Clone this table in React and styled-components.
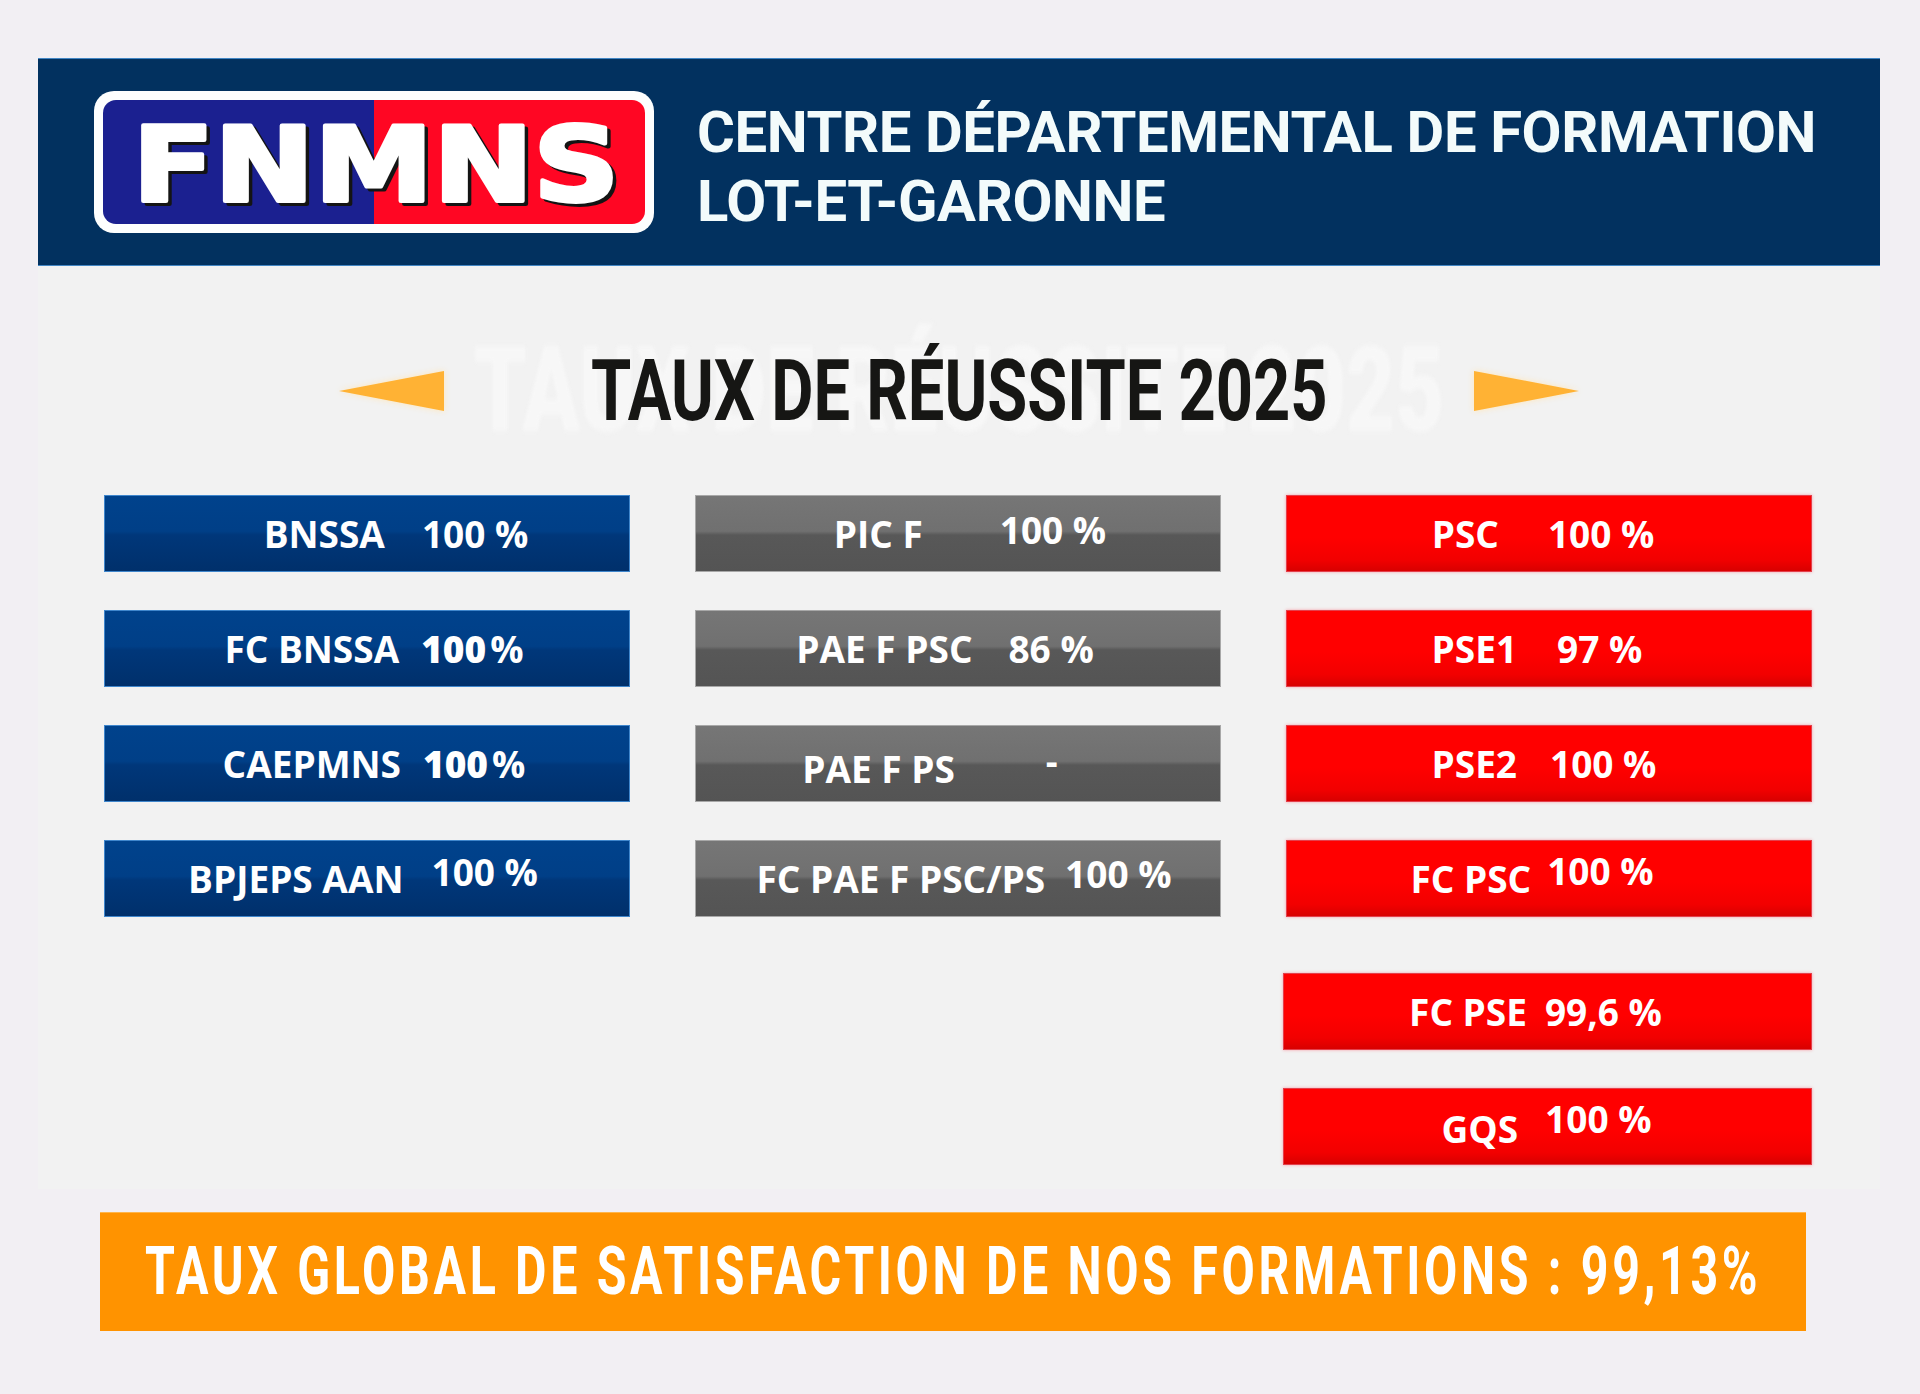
import React from 'react';
import styled, { createGlobalStyle, css } from 'styled-components';

const GlobalStyle = createGlobalStyle`
  html, body {
    margin: 0;
    padding: 0;
    background: #f2eff3;
  }
  * { box-sizing: border-box; }
`;

const Heavy = styled.span`
  font-weight: 800;
  margin-right: 4px;`;

const blueRows = [
  { label: 'BNSSA', value: '100 %', gap: 37, shift: 29 },
  { label: 'FC BNSSA', value: <><Heavy>100</Heavy>%</>, gap: 22, shift: 7 },
  { label: 'CAEPMNS', value: <><Heavy>100</Heavy>%</>, gap: 22, shift: 7 },
  { label: 'BPJEPS AAN', value: '100 %', gap: 28, shift: -4, valueDy: -7 },
];

const grayRows = [
  { label: 'PIC F', value: '100 %', gap: 77, shift: 12, valueDy: -4 },
  { label: 'PAE F PSC', value: '86 %', gap: 36, shift: -13 },
  { label: 'PAE F PS', value: '-', gap: 91, shift: -28, labelDy: 5, valueDy: -3 },
  { label: 'FC PAE F PSC/PS', value: '100 %', gap: 20, shift: 6, valueDy: -5 },
];

const redRows = [
  { label: 'PSC', value: '100 %', gap: 49, shift: -6 },
  { label: 'PSE1', value: '97 %', gap: 40, shift: -12 },
  { label: 'PSE2', value: '100 %', gap: 33, shift: -5 },
  { label: 'FC PSC', value: '100 %', gap: 16, shift: -17, valueDy: -8 },
  { label: 'FC PSE', value: '99,6 %', gap: 18, shift: -12, wide: true, apart: true },
  { label: 'GQS', value: '100 %', gap: 27, shift: -1, labelDy: 2, valueDy: -8, wide: true },
];

function Logo() {
  return (
    <svg width="560" height="142" viewBox="0 0 560 142">
      <defs>
        <clipPath id="logo-inner">
          <rect x="9" y="9" width="542" height="124" rx="13" />
        </clipPath>
      </defs>
      <rect x="0" y="0" width="560" height="142" rx="20" fill="#fdfefe" />
      <g clipPath="url(#logo-inner)">
        <rect x="0" y="0" width="280" height="142" fill="#1b2090" />
        <rect x="280" y="0" width="280" height="142" fill="#ff0623" />
      </g>
      <text
        x="42" y="113" textLength="487" lengthAdjust="spacingAndGlyphs"
        fontFamily="'DejaVu Sans', Verdana, sans-serif" fontWeight="700" fontSize="104"
        fill="#141414" stroke="#141414" strokeWidth="4" strokeLinejoin="round"
      >
        FNMNS
      </text>
      <text
        x="38.5" y="110" textLength="487" lengthAdjust="spacingAndGlyphs"
        fontFamily="'DejaVu Sans', Verdana, sans-serif" fontWeight="700" fontSize="104"
        fill="#ffffff" stroke="#ffffff" strokeWidth="4" strokeLinejoin="round"
      >
        FNMNS
      </text>
    </svg>
  );
}

function Arrow({ dir }) {
  const points = dir === 'left' ? '0,20 105,0 105,40' : '105,20 0,0 0,40';
  return (
    <ArrowSvg width="105" height="40" viewBox="0 0 105 40">
      <polygon points={points} fill="#ffb234" />
    </ArrowSvg>
  );
}

function Bar({ tone, row }) {
  return (
    <BarBox $tone={tone} $gap={row.gap} $shift={row.shift} $wide={row.wide} $apart={row.apart}>
      <Label $dy={row.labelDy}>{row.label}</Label>
      <Label $dy={row.valueDy}>{row.value}</Label>
    </BarBox>
  );
}

export default function App() {
  return (
    <>
      <GlobalStyle />
      <Page>
        <Header>
          <Logo />
          <HeaderText>
            CENTRE DÉPARTEMENTAL DE FORMATION
            <br />
            LOT-ET-GARONNE
          </HeaderText>
        </Header>
        <Panel>
          <TitleRow>
            <Arrow dir="left" />
            <TitleWrap data-ghost="TAUX DE RÉUSSITE 2025">
              <Title>TAUX DE RÉUSSITE 2025</Title>
            </TitleWrap>
            <Arrow dir="right" />
          </TitleRow>
          <Board>
            <Column>
              {blueRows.map((row) => <Bar key={row.label} tone="blue" row={row} />)}
            </Column>
            <Column>
              {grayRows.map((row) => <Bar key={row.label} tone="gray" row={row} />)}
            </Column>
            <Column>
              {redRows.map((row) => <Bar key={row.label} tone="red" row={row} />)}
            </Column>
          </Board>
        </Panel>
        <Banner>
          <BannerText>TAUX GLOBAL DE SATISFACTION DE NOS FORMATIONS : 99,13%</BannerText>
        </Banner>
      </Page>
    </>
  );
}

const Page = styled.div`
  width: 1920px;
  min-height: 1394px;
  padding: 58px 40px 0 38px;
  font-family: 'Open Sans', 'Liberation Sans', sans-serif;`;

const Header = styled.header`
  height: 208px;
  background: #02315f;
  border-top: 1px solid #4286c4;
  border-bottom: 1px solid #4286c4;
  display: flex;
  align-items: center;
  gap: 43px;
  padding-left: 56px;`;

const HeaderText = styled.h1`
  margin: 0;
  padding-top: 10px;
  font-family: Roboto, 'Liberation Sans', sans-serif;
  font-weight: 700;
  font-size: 58px;
  line-height: 69px;
  letter-spacing: -0.4px;
  color: #f3fbfb;
  white-space: nowrap;`;

const Panel = styled.main`
  background: #f2f2f2;
  padding-bottom: 24px;`;

const TitleRow = styled.div`
  height: 229px;
  padding-top: 20px;
  display: flex;
  align-items: center;
  justify-content: center;
  gap: 147px;`;

const ArrowSvg = styled.svg`
  flex: none;
  filter: drop-shadow(0 0 3px #ffe6b8);`;

const TitleWrap = styled.div`
  position: relative;
  width: 736px;
  height: 100px;
  display: flex;
  align-items: center;
  justify-content: center;

  &::before {
    content: attr(data-ghost);
    position: absolute;
    left: 50%;
    top: 50%;
    font-family: Roboto, 'Liberation Sans', sans-serif;
    font-weight: 900;
    font-size: 118px;
    line-height: 1;
    color: #f7f7f7;
    white-space: nowrap;
    filter: blur(2.5px);
    transform: translate(-50%, -50%) scaleX(0.72);
  }`;

const Title = styled.h2`
  position: relative;
  margin: 0;
  font-family: Roboto, 'Liberation Sans', sans-serif;
  font-weight: 700;
  font-size: 86px;
  line-height: 1;
  color: #161614;
  white-space: nowrap;
  transform: scaleX(0.756);`;

const Board = styled.div`
  display: grid;
  grid-template-columns: repeat(3, 526px);
  column-gap: 65px;
  margin-left: 66px;
  align-items: start;`;

const Column = styled.div`
  display: flex;
  flex-direction: column;
  gap: 38px;`;

const tones = {
  blue: css`
    background: linear-gradient(180deg, #00428c 0%, #003f87 47%, #00377a 52%, #00306b 100%);
    border: 1px solid #3f86cc;`,
  gray: css`
    background: linear-gradient(180deg, #767676 0%, #707070 47%, #585858 52%, #545454 100%);
    border: 1px solid #a8a8a8;`,
  red: css`
    background: linear-gradient(180deg, #ff0000 0%, #ff0000 55%, #f20000 85%, #d80000 100%);
    border: 1px solid #e4404c;
    box-shadow: 0 0 3px rgba(255, 60, 80, 0.45);`,
};

const BarBox = styled.div`
  height: 77px;
  display: flex;
  align-items: center;
  justify-content: center;
  gap: ${({ $gap }) => $gap}px;
  padding-left: ${({ $shift }) => Math.max(0, $shift * 2)}px;
  padding-right: ${({ $shift }) => Math.max(0, -$shift * 2)}px;
  margin-left: ${({ $wide }) => ($wide ? -3 : 0)}px;
  margin-top: ${({ $apart }) => ($apart ? 18 : 0)}px;
  color: #fff;
  font-size: 37px;
  font-weight: 700;
  line-height: 1;
  white-space: nowrap;
  ${({ $tone }) => tones[$tone]}`;

const Label = styled.span`
  transform: translateY(${({ $dy }) => $dy || 0}px);`;

const Banner = styled.div`
  margin: 23px 0 0 62px;
  width: 1706px;
  height: 119px;
  background: #ff9300;
  border-top: 1px solid #ffb54a;
  display: flex;
  align-items: center;
  justify-content: center;`;

const BannerText = styled.div`
  font-family: Roboto, 'Liberation Sans', sans-serif;
  font-weight: 700;
  font-size: 66px;
  line-height: 1;
  letter-spacing: 5px;
  color: #fff;
  white-space: nowrap;
  transform: scaleX(0.732);`;
